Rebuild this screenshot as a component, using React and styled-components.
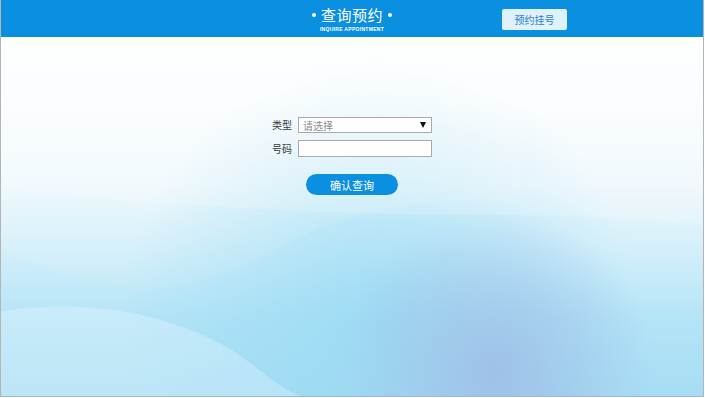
import React from 'react';
import styled, { createGlobalStyle } from 'styled-components';

const GlobalStyle = createGlobalStyle`
  html, body {
    margin: 0;
    padding: 0;
    background: #ffffff;
  }
  body {
    font-family: "Noto Sans CJK SC", "Liberation Sans", sans-serif;
  }
`;

const Frame = styled.div`
  position: relative;
  box-sizing: border-box;
  width: 704px;
  height: 397px;
  border: 1px solid #b4b4b4;
  border-top: none;
  overflow: hidden;
  background: linear-gradient(180deg, #ffffff 0%, #fbfdfe 25%, #eef8fd 46%, #d4effa 63%, #b5e4f7 80%, #a6ddf4 100%);
  display: flex;
  flex-direction: column;
`;

const Backdrop = styled.svg`
  position: absolute;
  left: 0;
  top: 0;
  width: 100%;
  height: 100%;
  z-index: 0;
`;

const Header = styled.header`
  position: relative;
  z-index: 1;
  height: 37px;
  background: #0b8fe1;
  display: grid;
  grid-template-columns: 1fr auto 1fr;
  align-items: center;
`;

const TitleBlock = styled.div`
  grid-column: 2;
  display: flex;
  flex-direction: column;
  align-items: center;
  color: #ffffff;
  padding-top: 1px;
`;

const Title = styled.h1`
  margin: 0;
  font-size: 15px;
  font-weight: 400;
  line-height: 20px;
  letter-spacing: 0.5px;
  display: flex;
  align-items: center;
  gap: 5px;
`;

const Dot = styled.span`
  width: 4px;
  height: 4px;
  border-radius: 50%;
  background: #ffffff;
`;

const Subtitle = styled.div`
  font-family: "Liberation Sans", sans-serif;
  font-size: 5px;
  font-weight: 700;
  letter-spacing: 0.3px;
  line-height: 8px;
`;

const HeaderActions = styled.div`
  grid-column: 3;
  display: flex;
  justify-content: flex-start;
  padding-left: 110px;
`;

const RegisterButton = styled.button`
  width: 65px;
  height: 21px;
  margin-top: 1px;
  border: none;
  border-radius: 2px;
  background: #def1fc;
  color: #2a7fc4;
  font-family: inherit;
  font-size: 10px;
  padding: 0;
`;

const Main = styled.main`
  position: relative;
  z-index: 1;
  flex: 1;
  display: flex;
  flex-direction: column;
  align-items: center;
  padding-top: 80px;
`;

const Form = styled.form`
  display: grid;
  grid-template-columns: auto 134px;
  column-gap: 6px;
  row-gap: 7px;
  align-items: center;
`;

const Label = styled.label`
  font-size: 10px;
  color: #3a3a3a;
  line-height: 16px;
`;

const SelectBox = styled.div`
  box-sizing: border-box;
  height: 16px;
  border: 1px solid #a9a9a9;
  background: #ffffff;
  display: flex;
  align-items: center;
  justify-content: space-between;
  padding: 0 5px 0 4px;
  font-size: 10px;
  color: #8a8a8a;
`;

const Arrow = styled.span`
  width: 0;
  height: 0;
  border-left: 3.5px solid transparent;
  border-right: 3.5px solid transparent;
  border-top: 6px solid #111;
`;

const TextInput = styled.input`
  box-sizing: border-box;
  width: 134px;
  height: 17px;
  border: 1px solid #a9a9a9;
  background: #ffffff;
  padding: 0 4px;
  font-size: 10px;
  outline: none;
`;

const SubmitButton = styled.button`
  margin-top: 17px;
  width: 92px;
  height: 21px;
  border: none;
  border-radius: 11px;
  background: #0b8fe1;
  color: #ffffff;
  font-family: inherit;
  font-size: 11px;
  padding: 0;
`;

export default function App() {
  return (
    <>
      <GlobalStyle />
      <Frame>
        <Backdrop viewBox="0 0 704 397" preserveAspectRatio="none">
          <defs>
            <radialGradient id="violet" cx="495" cy="372" r="160" gradientUnits="userSpaceOnUse">
              <stop offset="0" stopColor="#9fbce6" stopOpacity="0.85" />
              <stop offset="1" stopColor="#9fbce6" stopOpacity="0" />
            </radialGradient>
            <radialGradient id="sky" cx="380" cy="320" r="260" gradientUnits="userSpaceOnUse">
              <stop offset="0" stopColor="#95d9f3" stopOpacity="0.75" />
              <stop offset="1" stopColor="#95d9f3" stopOpacity="0" />
            </radialGradient>
            <linearGradient id="fade" x1="0" y1="0" x2="0" y2="1">
              <stop offset="0" stopColor="#ffffff" stopOpacity="0.6" />
              <stop offset="1" stopColor="#ffffff" stopOpacity="0.1" />
            </linearGradient>
          </defs>
          <rect x="0" y="0" width="704" height="397" fill="url(#sky)" />
          <rect x="0" y="0" width="704" height="397" fill="url(#violet)" />
          <path d="M0 190 C150 205 320 215 440 215 C560 215 650 220 704 225 L704 0 L0 0 Z" fill="#ffffff" opacity="0.18" />
          <path d="M0 250 C60 280 120 292 170 288 C230 280 270 250 320 228 C380 205 450 198 520 202 L520 0 L0 0 Z" fill="url(#fade)" opacity="0.4" />
          <path d="M0 312 C80 300 160 310 230 350 C260 370 280 390 300 397 L0 397 Z" fill="#ffffff" opacity="0.25" />
        </Backdrop>
        <Header>
          <TitleBlock>
            <Title>
              <Dot />
              查询预约
              <Dot />
            </Title>
            <Subtitle>INQUIRE APPOINTMENT</Subtitle>
          </TitleBlock>
          <HeaderActions>
            <RegisterButton type="button">预约挂号</RegisterButton>
          </HeaderActions>
        </Header>
        <Main>
          <Form onSubmit={(e) => e.preventDefault()}>
            <Label>类型</Label>
            <SelectBox>
              <span>请选择</span>
              <Arrow />
            </SelectBox>
            <Label>号码</Label>
            <TextInput type="text" />
          </Form>
          <SubmitButton type="button">确认查询</SubmitButton>
        </Main>
      </Frame>
    </>
  );
}
